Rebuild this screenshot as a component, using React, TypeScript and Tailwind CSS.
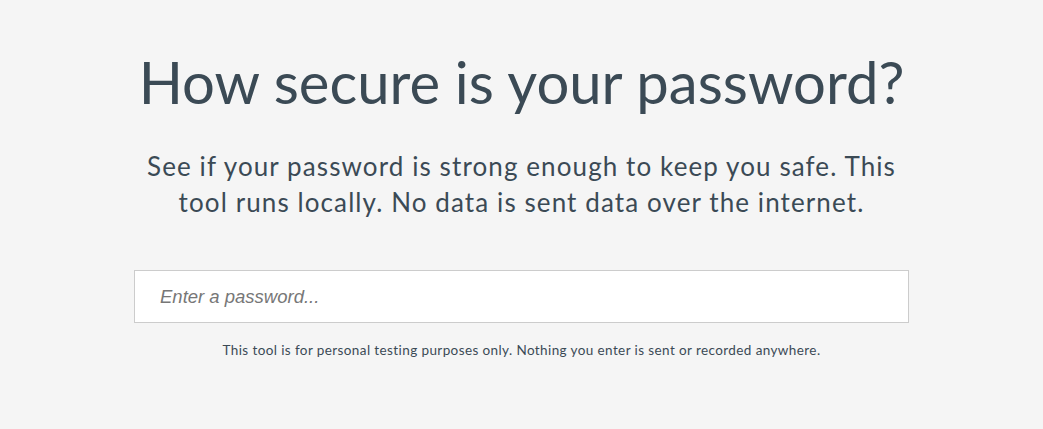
export default function App() {
  return (
    <div className="min-h-[429px] bg-[#f5f5f5] text-[#3b4a55] font-['Lato','Noto_Sans',sans-serif]">
      <div className="mx-auto flex w-[775px] flex-col items-center pt-[44px]">
        <h1 className="whitespace-nowrap text-[58px] leading-[76px] font-normal">How secure is your password?</h1>
        <p className="mt-[28px] w-[790px] text-center text-[26px] leading-[36px] tracking-[1.1px]">
          See if your password is strong enough to keep you safe. This tool runs locally. No data is sent data over the internet.
        </p>
        <input
          type="text"
          placeholder="Enter a password..."
          className="mt-[50px] h-[53px] w-full border border-[#cccccc] bg-white px-[25px] font-['Liberation_Sans',Arial,sans-serif] text-[18.5px] placeholder:italic placeholder:text-[#777777] outline-none"
        />
        <p className="mt-[17px] whitespace-nowrap text-[13.5px] leading-[20px] tracking-[0.4px] text-[#3b4a55]">
          This tool is for personal testing purposes only. Nothing you enter is sent or recorded anywhere.
        </p>
      </div>
    </div>
  )
}
